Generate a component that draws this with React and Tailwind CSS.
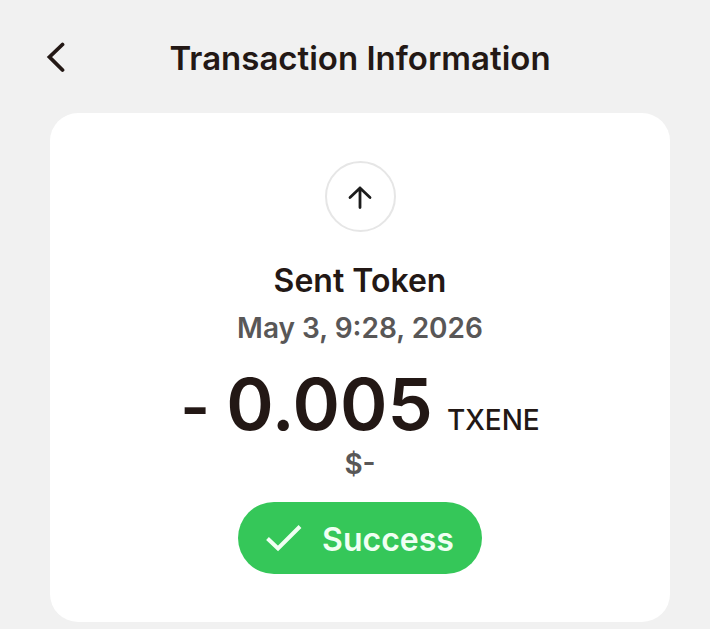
export default function App() {
  return (
    <main className="min-h-screen bg-[#f1f1f1] pr-10 pb-[7px] pl-[50px] font-[Inter,sans-serif] text-[#231815]">
      <header className="relative flex h-[113px] items-center justify-center pt-[2px]">
        <button type="button" aria-label="Back" className="absolute top-9 -left-3 flex h-11 w-9 items-center justify-center">
          <svg width="20" height="32" viewBox="0 0 20 32" fill="none" stroke="currentColor" strokeWidth="3.800" strokeLinecap="round"><path d="M16.500 2.500 3.500 15l13 13" /></svg>
        </button>
        <h1 className="text-[33px] leading-10 font-semibold whitespace-nowrap">Transaction Information</h1>
      </header>
      <section className="flex flex-col items-center rounded-[28px] bg-white py-12">
        <div className="flex size-[71px] items-center justify-center rounded-full border-2 border-[#e6e6e6] text-[#1c1c1c]">
          <svg width="26" height="26" viewBox="0 0 26 26" fill="none" stroke="currentColor" strokeWidth="2.800" strokeLinecap="round" strokeLinejoin="round"><path d="M13 23.500V4M3 13.500 13 4l10 9.500" /></svg>
        </div>
        <h2 className="mt-7 text-[32px] leading-[42px] font-semibold">Sent Token</h2>
        <p className="mt-[6px] text-[28px] leading-10 font-semibold text-[#595757]">May 3, 9:28, 2026</p>
        <p className="mt-4 flex items-baseline gap-[14px] font-semibold whitespace-nowrap">
          <span className="text-[72px] leading-20"><span className="text-[64px] leading-none">- </span>0.005</span>
          <span className="text-[28px] leading-none font-medium">TXENE</span>
        </p>
        <p className="text-[28px] leading-10 font-semibold text-[#595757]">$-</p>
        <div className="mt-[18px] flex h-[72px] items-center gap-5 rounded-full bg-[#35c759] px-7 text-[#f0fff3]">
          <svg width="36" height="28" viewBox="0 0 36 28" fill="none" stroke="currentColor" strokeWidth="4"><path d="M1.500 14.500 12 24.500 34 2.500" /></svg>
          <span className="pt-1 text-[32px] leading-10 font-semibold">Success</span>
        </div>
      </section>
    </main>
  );
}
